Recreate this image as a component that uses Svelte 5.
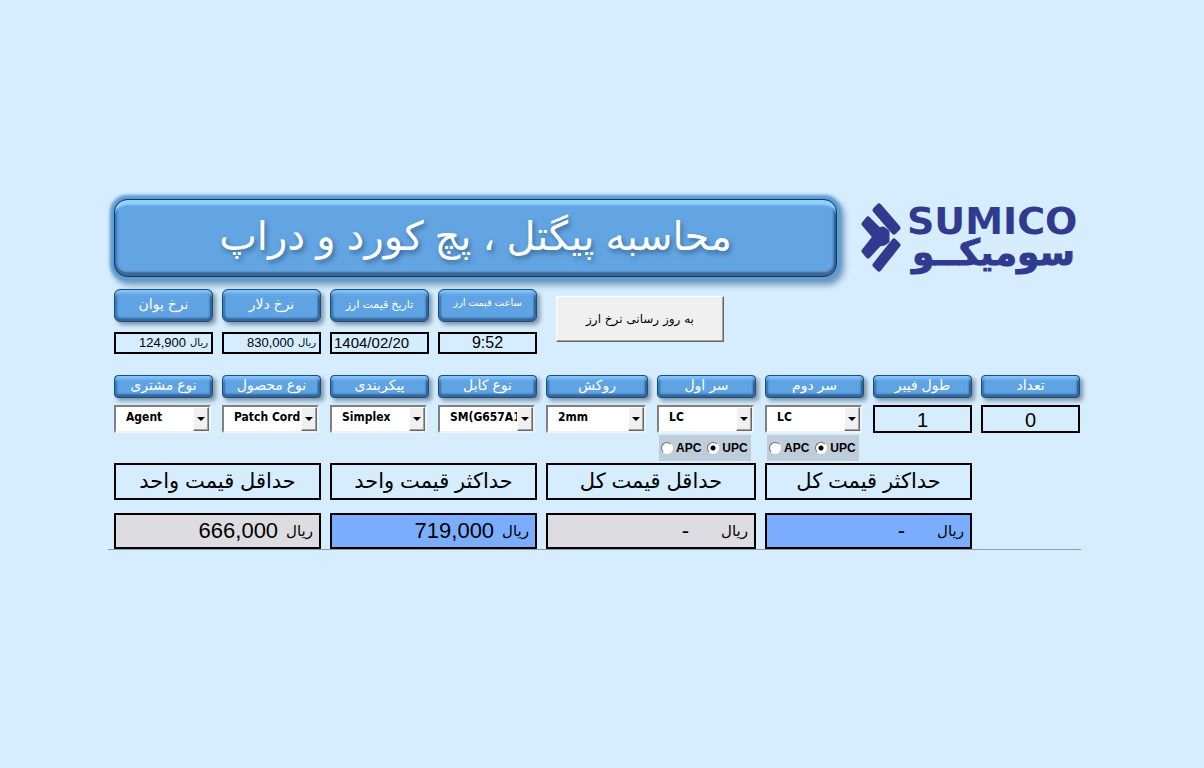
<script>
  const rates = [
    { id: 'yuan', label: 'نرخ یوان', value: '124,900', kind: 'money' },
    { id: 'dollar', label: 'نرخ دلار', value: '830,000', kind: 'money' },
    { id: 'date', label: 'تاریخ قیمت ارز', value: '1404/02/20', kind: 'date' },
    { id: 'time', label: 'ساعت قیمت ارز', value: '9:52', kind: 'time' }
  ];

  const choices = [
    { id: 'customer', label: 'نوع مشتری', options: ['Agent'] },
    { id: 'product', label: 'نوع محصول', options: ['Patch Cord'] },
    { id: 'config', label: 'پیکربندی', options: ['Simplex'] },
    { id: 'cable', label: 'نوع کابل', options: ['SM(G657A1)'] },
    { id: 'jacket', label: 'روکش', options: ['2mm'] },
    { id: 'first', label: 'سر اول', options: ['LC'], polish: true },
    { id: 'second', label: 'سر دوم', options: ['LC'], polish: true }
  ];

  let polish = $state({ first: 'UPC', second: 'UPC' });
  let length = $state('1');
  let count = $state('0');

  const totals = [
    { label: 'حداقل قیمت واحد', value: '666,000', blue: false },
    { label: 'حداکثر قیمت واحد', value: '719,000', blue: true },
    { label: 'حداقل قیمت کل', value: '-', blue: false },
    { label: 'حداکثر قیمت کل', value: '-', blue: true }
  ];
</script>

<main class="sheet">
  <header class="top">
    <h1 class="title" dir="rtl">محاسبه پیگتل ، پچ کورد و دراپ</h1>
    <svg class="logo" viewBox="0 0 218 76" role="img" aria-label="SUMICO سومیکو">
      <g fill="#303a8e" stroke="#303a8e" stroke-width="5" stroke-linejoin="round">
        <path d="M13 11 L17 7 L36 29 L32 33Z" />
        <path d="M13 66 L17 70 L36 46 L32 42Z" />
        <path d="M2 25 L6 20 L17 31 L21 30 L25 33 V42 L22 44 L17 45 L6 57 L2 52 L13 38Z" />
      </g>
      <text class="logo-latin" x="45" y="35">SUMICO</text>
      <text class="logo-farsi" x="213" y="66" direction="rtl">سومیکــو</text>
    </svg>
  </header>

  <section class="grid rates">
    {#each rates as rate}
      <div class="rate">
        <span class="plate tall {rate.kind}-plate" dir="rtl" id={rate.id}>{rate.label}</span>
        <output class="box {rate.kind}" aria-labelledby={rate.id}>
          <span>{rate.value}</span>
          {#if rate.kind === 'money'}<span class="rial">ریال</span>{/if}
        </output>
      </div>
    {/each}
    <button class="update" type="button" dir="rtl">به روز رسانی نرخ ارز</button>
  </section>

  <section class="grid fields">
    {#each choices as choice}
      <div class="field">
        <label class="plate" dir="rtl" for={choice.id}>{choice.label}</label>
        <div class="combo">
          <select id={choice.id}>
            {#each choice.options as option}<option>{option}</option>{/each}
          </select>
          <span class="arrow"></span>
        </div>
        {#if choice.polish}
          <div class="polish">
            {#each ['APC', 'UPC'] as kind}
              <label><input type="radio" name="{choice.id}-polish" value={kind} bind:group={polish[choice.id]} />{kind}</label>
            {/each}
          </div>
        {/if}
      </div>
    {/each}
    <div class="field">
      <label class="plate" dir="rtl" for="length">طول فیبر</label>
      <input class="number" id="length" type="text" bind:value={length} />
    </div>
    <div class="field">
      <label class="plate" dir="rtl" for="count">تعداد</label>
      <input class="number" id="count" type="text" bind:value={count} />
    </div>
  </section>

  <section class="grid totals">
    {#each totals as total, i}
      <div class="total">
        <span class="caption" dir="rtl" id="total-{i}">{total.label}</span>
        <output class="sum" class:blue={total.blue} class:empty={total.value === '-'} aria-labelledby="total-{i}">
          <span>{total.value}</span><span class="rial">ریال</span>
        </output>
      </div>
    {/each}
  </section>
</main>

<style>
  :global(body) {
    background: #d5edff;
  }

  .sheet,
  .sheet * {
    box-sizing: border-box;
  }

  .sheet {
    margin: 199px 123px 0 108px;
    padding: 0 1px 0 6px;
    border-bottom: 1px solid #8d99a5;
    font-family: 'Liberation Sans', 'DejaVu Sans', sans-serif;
    color: #000;
  }

  .top {
    display: grid;
    grid-template-columns: 723fr 218fr;
    gap: 25px;
    height: 78px;
  }

  .title {
    margin: 0;
    padding-bottom: 4px;
    display: flex;
    align-items: center;
    justify-content: center;
    border: 1px solid #12395f;
    border-radius: 13px;
    background: #63a5e2;
    box-shadow:
      0 0 3px 4px #5f9cd4,
      3px 4px 6px 4px #7797b8,
      inset 0 6px 2px -1px #8fd2ff,
      inset 0 -4px 2px 0 #3f668e,
      inset -2px 0 3px #1c4a7a,
      inset 2px 0 3px #3373b0;
    color: #fff;
    font-size: 40px;
    font-weight: 400;
    line-height: 60px;
    text-shadow: 2px 3px 5px #39699a;
    white-space: nowrap;
  }

  .logo {
    width: 100%;
    height: 76px;
    overflow: visible;
  }

  .logo text {
    fill: #303a8e;
    font-family: 'DejaVu Sans', sans-serif;
    font-weight: 700;
  }

  .logo-latin {
    font-size: 38px;
  }

  .logo-farsi {
    font-size: 36px;
    stroke: #303a8e;
    stroke-width: 1px;
  }

  .grid {
    display: grid;
    grid-template-columns: repeat(4, 99fr) 102fr repeat(4, 99fr);
    column-gap: 9px;
  }

  .rates {
    margin-top: 12px;
  }

  .plate {
    display: flex;
    align-items: center;
    justify-content: center;
    width: 100%;
    height: 23px;
    padding-bottom: 3px;
    border: 1px solid #1d4d7c;
    border-radius: 4px;
    background: #5fa3e2;
    box-shadow:
      3px 3px 4px #8195a8,
      inset 0 4px 3px -1px #83c6fb,
      inset 0 -3px 2px 0 #34679b,
      inset -2px 0 2px #1d4f84,
      inset 2px 0 2px #2f6fad;
    color: #fff;
    font-size: 14px;
    line-height: 16px;
    white-space: nowrap;
  }

  .plate.tall {
    height: 33px;
    border-radius: 6px;
  }

  .date-plate {
    font-size: 11px;
  }

  .time-plate {
    padding-bottom: 5px;
    font-size: 10px;
  }

  .box {
    display: flex;
    align-items: center;
    justify-content: center;
    height: 22px;
    margin-top: 10px;
    border: 2px solid #000;
    font-size: 16px;
    line-height: 18px;
  }

  .money {
    justify-content: flex-end;
    gap: 4px;
    padding-right: 3px;
    font-size: 13px;
  }

  .date {
    justify-content: flex-start;
    padding-left: 2px;
    font-size: 15px;
  }

  .update {
    grid-column: 5 / span 2;
    width: 80%;
    height: 46px;
    margin: 7px 0 0 10px;
    justify-self: start;
    border: 1px solid;
    border-color: #fff #696969 #696969 #fff;
    background: #f0f0f0;
    box-shadow: inset -1px -1px #a0a0a0;
    color: #000;
    font-family: 'DejaVu Sans', sans-serif;
    font-size: 12px;
    white-space: nowrap;
  }

  .fields {
    margin-top: 21px;
    height: 88px;
  }

  .combo {
    position: relative;
    height: 28px;
    margin: 7px 2px 0 0;
  }

  .combo select {
    appearance: none;
    width: 100%;
    height: 28px;
    padding: 0 14px 4px 10px;
    border: 2px solid;
    border-color: #808080 #eef3f8 #eef3f8 #808080;
    border-radius: 0;
    background: #fff;
    color: #000;
    font-family: 'DejaVu Sans Condensed', 'Noto Sans', sans-serif;
    font-size: 12px;
    font-weight: 700;
    text-overflow: clip;
  }

  .arrow {
    position: absolute;
    top: 2px;
    right: 2px;
    bottom: 2px;
    width: 16px;
    border: 1px solid;
    border-color: #fff #696969 #696969 #fff;
    background: #f0f0f0;
    box-shadow: inset -1px -1px #a0a0a0;
    pointer-events: none;
    display: grid;
    place-items: center;
  }

  .arrow::after {
    content: '';
    border: 4px solid transparent;
    border-top-color: #000;
    border-bottom: 0;
  }

  .polish {
    display: flex;
    align-items: center;
    gap: 6px;
    width: 92px;
    height: 26px;
    margin: 2px 0 0 2px;
    padding-left: 2px;
    background: #bfcddb;
  }

  .polish label {
    display: flex;
    align-items: center;
    gap: 3px;
    font-size: 12px;
    font-weight: 700;
  }

  .polish input {
    appearance: none;
    width: 12px;
    height: 12px;
    margin: 0;
    border: 1px solid;
    border-color: #707070 #fff #fff #707070;
    border-radius: 50%;
    background: #fff;
  }

  .polish input:checked {
    background: radial-gradient(circle, #000 2px, #fff 3px);
  }

  .number {
    display: block;
    width: 100%;
    height: 28px;
    margin-top: 7px;
    padding: 2px 0 0;
    border: 2px solid #000;
    border-radius: 0;
    background: transparent;
    color: #000;
    font-family: inherit;
    font-size: 20px;
    text-align: center;
  }

  .total {
    grid-column: span 2;
  }

  .caption {
    display: flex;
    align-items: center;
    justify-content: center;
    height: 37px;
    padding-bottom: 2px;
    border: 2px solid #000;
    font-size: 21px;
    line-height: 32px;
    white-space: nowrap;
  }

  .sum {
    display: flex;
    align-items: center;
    justify-content: flex-end;
    gap: 8px;
    height: 36px;
    margin-top: 13px;
    padding-right: 6px;
    border: 2px solid #000;
    background: #dcdce1;
    font-size: 22px;
    line-height: 30px;
  }

  .sum.empty {
    gap: 32px;
  }

  .sum.blue {
    background: #7badff;
  }

  .rial {
    font-family: 'DejaVu Sans', sans-serif;
    font-size: 15px;
  }

  .money .rial {
    font-size: 10px;
  }
</style>
